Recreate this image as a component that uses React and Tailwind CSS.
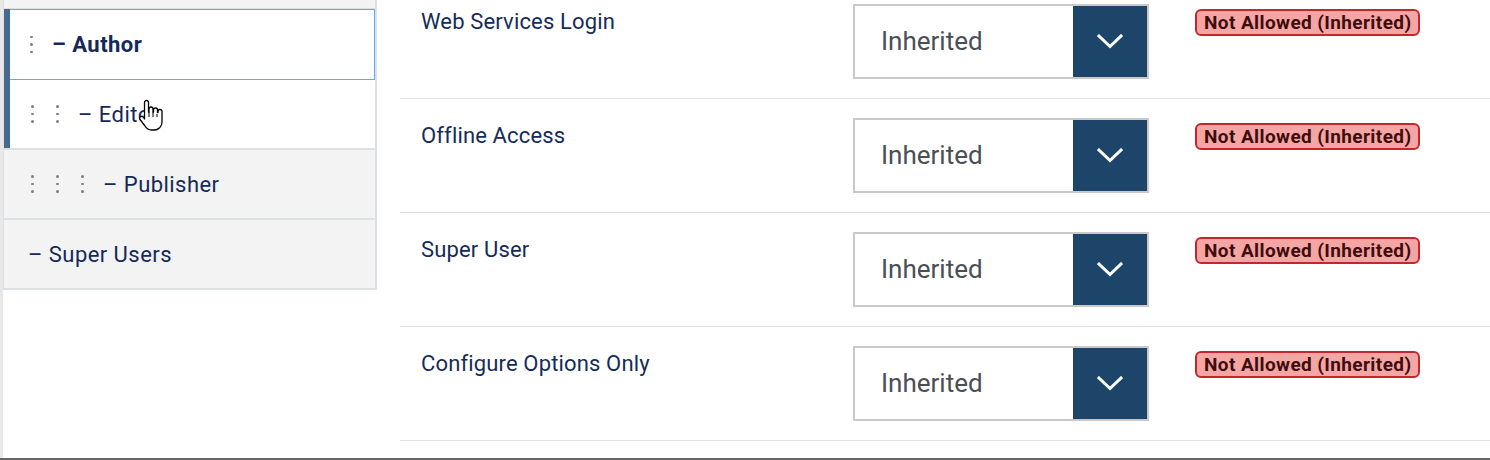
import React from 'react';

const roles = [
  { name: 'Author', depth: 1, active: true, bar: true },
  { name: 'Editor', depth: 2, bar: true },
  { name: 'Publisher', depth: 3 },
  { name: 'Super Users', depth: 0 },
];

const permissions = ['Web Services Login', 'Offline Access', 'Super User', 'Configure Options Only'];

function Handle() {
  return (
    <span className="flex w-[25px] shrink-0 items-center">
      <span className="ml-px flex flex-col gap-[5px]">
        <span className="h-[2.5px] w-[2.5px] rounded-full bg-[#7d7d7d]" />
        <span className="h-[2.5px] w-[2.5px] rounded-full bg-[#7d7d7d]" />
        <span className="h-[2.5px] w-[2.5px] rounded-full bg-[#7d7d7d]" />
      </span>
    </span>
  );
}

function RoleItem({ role }) {
  const base = role.active
    ? 'h-[71px] border border-[#62a8f5] bg-white font-bold'
    : role.bar
      ? 'h-[70px] border-b-2 border-[#dde0e4] bg-white'
      : 'h-[70px] border-b-2 border-[#dde0e4] bg-[#f3f3f3]';
  return (
    <div className={`flex items-stretch ${base}`}>
      {role.bar && <div className={`w-[6px] shrink-0 bg-[#476a8c] ${role.active ? '-ml-px -my-px' : ''}`} />}
      <div
        className={`flex flex-1 items-center text-[22px] tracking-[0.45px] text-[#14295a] ${role.bar ? (role.active ? 'pl-[19px]' : 'pl-[20px]') : 'pl-[26px]'}`}
      >
        {Array.from({ length: role.depth }).map((_, i) => (
          <Handle key={i} />
        ))}
        <span className="-ml-[2px]">– {role.name}</span>
      </div>
    </div>
  );
}

function Chevron() {
  return (
    <svg width="26" height="15" viewBox="0 0 26 15" fill="none">
      <polyline points="2,2 13,12.5 24,2" stroke="white" strokeWidth="3" strokeLinecap="square" />
    </svg>
  );
}

function PermissionRow({ label }) {
  return (
    <div className="flex h-[114px] shrink-0 items-start border-t border-[#e0e0e6] pt-[19px]">
      <div className="mt-[3px] w-[453px] shrink-0 pl-[21px] text-[22px] leading-[30px] tracking-[0.15px] text-[#152c5b]">
        {label}
      </div>
      <div className="flex h-[75px] w-[296px] shrink-0 border-2 border-[#c9c9c9] bg-white">
        <div className="flex flex-1 items-center pl-[26px] text-[26px] text-[#4a4f55]">Inherited</div>
        <div className="flex w-[74px] items-center justify-center bg-[#1c4569]">
          <Chevron />
        </div>
      </div>
      <div className="ml-[46px] mt-[5px] flex h-[27px] items-center rounded-[6px] border-2 border-[#c3272b] bg-[#f6a5a5] px-[7px] text-[19px] font-bold leading-none tracking-[0.4px] text-[#3d0c0c]">
        Not Allowed (Inherited)
      </div>
    </div>
  );
}

function HandCursor() {
  return (
    <svg className="absolute left-[138px] top-[99px]" width="26" height="34" viewBox="0 0 26 34" fill="none">
      <path
        d="M8.5 1.5c1.1 0 2 .9 2 2v9.5h.5v-3c0-1.1.9-2 2-2s2 .9 2 2v3h.5v-2c0-1.1.9-2 2-2s2 .9 2 2v2.5h.5v-1c0-1.1.9-2 2-2s2 .9 2 2V23c0 4.5-3.5 8-8 8h-2.5c-3 0-5-1.5-6.5-4L2 20.5c-.6-1-.3-2.2.7-2.8s2.2-.3 2.8.7L6.5 20V3.5c0-1.1.9-2 2-2z"
        fill="white"
        stroke="black"
        strokeWidth="1.3"
        strokeLinejoin="round"
      />
      <path d="M11 13v5M15 13v5M19 15v3" stroke="black" strokeWidth="1" />
    </svg>
  );
}

export default function App() {
  return (
    <div
      className="relative flex h-[460px] w-[1490px] overflow-hidden border-b-2 border-[#666] bg-white"
      style={{ fontFamily: 'Roboto, "Noto Sans", sans-serif' }}
    >
      <div className="w-[3px] shrink-0 bg-[#e8e8e8]" />
      <div className="flex w-[374px] shrink-0 flex-col self-start border-l border-r-2 border-[#dde0e4]">
        <div className="h-[9px] border-b border-[#dde0e4] bg-[#f3f3f3]" />
        {roles.map((r) => (
          <RoleItem key={r.name} role={r} />
        ))}
      </div>
      <div className="-mt-4 flex flex-1 flex-col pl-[23px]">
        {permissions.map((p) => (
          <PermissionRow key={p} label={p} />
        ))}
        <div className="border-t border-[#e0e0e6]" />
      </div>
      <HandCursor />
    </div>
  );
}
